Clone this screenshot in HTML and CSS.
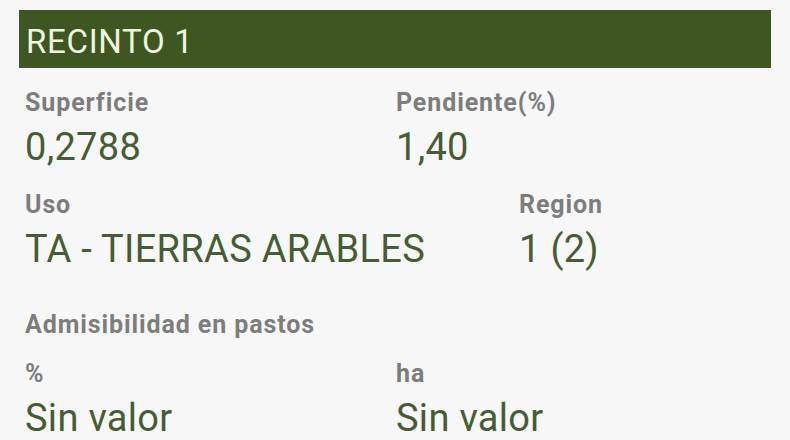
FILE: index.html
```html
<!DOCTYPE html>
<html lang="es">
<head>
<meta charset="utf-8">
<title>Recinto 1</title>
<link rel="stylesheet" href="styles.css">
</head>
<body>
<div class="screen">
  <div class="header">RECINTO 1</div>
  <div class="content">
    <div class="row row-a">
      <div class="field half">
        <div class="label">Superficie</div>
        <div class="value">0,2788</div>
      </div>
      <div class="field">
        <div class="label">Pendiente(%)</div>
        <div class="value">1,40</div>
      </div>
    </div>
    <div class="row row-b">
      <div class="field wide">
        <div class="label">Uso</div>
        <div class="value">TA - TIERRAS ARABLES</div>
      </div>
      <div class="field">
        <div class="label">Region</div>
        <div class="value">1 (2)</div>
      </div>
    </div>
    <div class="section-label label">Admisibilidad en pastos</div>
    <div class="row row-c">
      <div class="field half">
        <div class="label">%</div>
        <div class="value">Sin valor</div>
      </div>
      <div class="field">
        <div class="label">ha</div>
        <div class="value">Sin valor</div>
      </div>
    </div>
  </div>
</div>
</body>
</html>
```

FILE: styles.css
```css
html, body {
  margin: 0;
  padding: 0;
  background: #f7f7f7;
}
body {
  font-family: Roboto, "Liberation Sans", sans-serif;
  width: 790px;
  height: 440px;
  overflow: hidden;
}
.screen {
  padding: 10px 19px 0 19px;
}
.header {
  background: #3e5622;
  color: #eff5de;
  font-size: 33px;
  letter-spacing: 0.7px;
  line-height: 53px;
  padding: 5px 7px 0 7px;
  height: 53px;
  box-sizing: content-box;
}
.content {
  padding: 21px 0 0 6px;
}
.row {
  display: flex;
}
.field.half {
  width: 371px;
}
.field.wide {
  width: 494px;
}
.label {
  font-size: 25px;
  letter-spacing: 0.9px;
  line-height: 28px;
  font-weight: 700;
  color: #7d7d7d;
}
.value {
  font-size: 38px;
  letter-spacing: 0.3px;
  line-height: 46px;
  color: #465c34;
  margin-top: 7px;
}
.row-b {
  margin-top: 21px;
}
.section-label {
  margin-top: 39px;
}
.row-c {
  margin-top: 21px;
}
```
